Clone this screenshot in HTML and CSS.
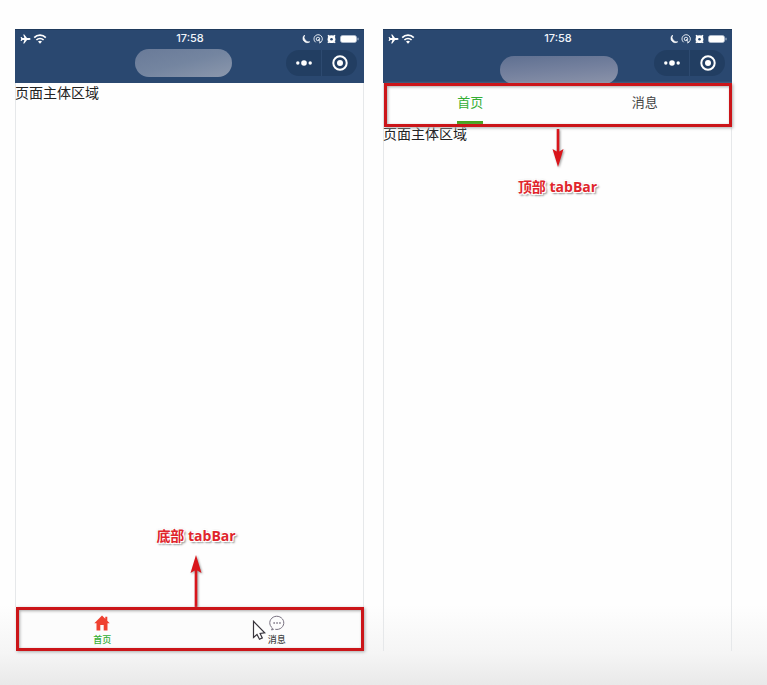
FILE: index.html
```html
<!DOCTYPE html>
<html lang="zh-CN">
<head>
<meta charset="utf-8">
<meta name="viewport" content="width=device-width, initial-scale=1">
<title>tabBar</title>
<link rel="stylesheet" href="styles.css">
</head>
<body>
<svg class="defs" aria-hidden="true">
  <symbol id="signal" viewBox="0 0 28 12">
    <path d="M10.500 6c0-.6-.6-.9-1.200-.9H7L4.300 1.500H3.200L4.400 5.100H2.500L1.500 3.900H.6L1.200 6 .6 8.100h.9l1-1.200h1.900L3.200 10.500h1.100L7 6.900h2.300c.6 0 1.200-.3 1.200-.9z" fill="#fff"/>
    <g fill="none" stroke="#fff" stroke-width="1.700"><path d="M14.200 4.600a8.200 8.200 0 0 1 11.600 0"/><path d="M16.400 7a5.100 5.100 0 0 1 7.200 0"/></g>
    <path d="M18 8.600a2.900 2.900 0 0 1 4 0l-2 2.200z" fill="#fff"/>
  </symbol>
  <symbol id="state" viewBox="0 0 60 12">
    <path d="M4.600 2A4.200 4.200 0 1 0 9.800 8.800 4.800 4.800 0 0 1 4.600 2z" fill="#fff" stroke="#fff" stroke-width=".6"/>
    <g fill="none" stroke="#dfe6ef"><path d="M15.700 9.300a4.200 4.200 0 1 1 3.300.7"/><circle cx="18" cy="6" r="1.800"/><path d="M18 6l3 4"/></g>
    <circle cx="31.500" cy="6.200" r="3.900" fill="#fff"/><path d="M28 3.500l1.300-1.100M35 3.500l-1.300-1.100M28.700 9l-.5.900M34.300 9l.5.900" stroke="#fff" stroke-width="1.800"/><circle cx="31.500" cy="6.200" r="1.300" fill="#2b4870"/>
    <rect x="40.500" y="2.500" width="16" height="7" rx="2" fill="#fff" stroke="#b4c1d2" stroke-width=".7"/><path d="M58 4.700v2.600" stroke="#9fb0c6" stroke-width="1.200"/>
  </symbol>
  <symbol id="more" viewBox="0 0 18 10"><circle cx="2.800" cy="5" r="1.700"/><circle cx="9" cy="5" r="2.800"/><circle cx="15.200" cy="5" r="1.700"/></symbol>
  <symbol id="target" viewBox="0 0 18 18"><circle cx="9" cy="9" r="6.700" fill="none" stroke="#fff" stroke-width="2"/><circle cx="9" cy="9" r="3"/></symbol>
</svg>
<main class="stage">
  <section class="phone">
    <header class="header">
      <div class="status">
        <svg class="signal"><use href="#signal"/></svg>
        <time>17:58</time>
        <svg class="state"><use href="#state"/></svg>
      </div>
      <div class="capsule">
        <button aria-label="更多"><svg class="more"><use href="#more"/></svg></button>
        <button aria-label="关闭"><svg class="target"><use href="#target"/></svg></button>
      </div>
      <span class="mask"></span>
    </header>
    <p class="content">页面主体区域</p>
    <div class="note note-bottom">
      <strong>底部 tabBar</strong>
      <svg class="arrow arrow-up" viewBox="0 0 14 52"><path d="M5.700 52h2.600V15.500L12.500 18 7 0 1.500 18l4.200-2.500z"/></svg>
    </div>
    <nav class="tabs tabs-bottom">
      <a href="#home" class="active">
        <svg class="icon" viewBox="0 0 16 16"><path d="M8 .5L.3 8.300h2.200v7.200h3.800V10h3.400v5.500h3.800V8.300h2.200L13.300 5.800V1.800h-2v2z" fill="#ef4130"/></svg>
        <span>首页</span>
      </a>
      <a href="#message">
        <svg class="icon" viewBox="0 0 16 16"><path d="M3.400 13A7 6.600 0 1 1 6.300 14.300M3.400 13l-.8 2 2.200-.8" fill="none" stroke="#77707f" stroke-width="1"/><path d="M4.400 8h1.500M7.300 8h1.500M10.200 8h1.500" stroke="#77707f" stroke-width="1.400"/></svg>
        <span>消息</span>
      </a>
      <svg class="cursor" viewBox="0 0 14 21"><path d="M1.500 1.300v16.200l3.500-3 2.500 4.700 2.800-1.300-2.200-4.500 4.600-.5z" fill="#fff" stroke="#38343c" stroke-width="1.200"/></svg>
    </nav>
  </section>

  <section class="phone">
    <header class="header">
      <div class="status">
        <svg class="signal"><use href="#signal"/></svg>
        <time>17:58</time>
        <svg class="state"><use href="#state"/></svg>
      </div>
      <div class="capsule">
        <button aria-label="更多"><svg class="more"><use href="#more"/></svg></button>
        <button aria-label="关闭"><svg class="target"><use href="#target"/></svg></button>
      </div>
      <span class="mask mask-wide"></span>
    </header>
    <nav class="tabs tabs-top">
      <a href="#home-top" class="active">首页</a>
      <a href="#message-top">消息</a>
    </nav>
    <p class="content">页面主体区域</p>
    <div class="note note-top">
      <svg class="arrow" viewBox="0 0 14 38"><path d="M5.700 0h2.600v22.500L12.500 20 7 38 1.500 20l4.200 2.500z"/></svg>
      <strong>顶部 tabBar</strong>
    </div>
  </section>
</main>
</body>
</html>
```
FILE: styles.css
```css
* {
  box-sizing: border-box;
}

body {
  margin: 0;
  font-family: "Open Sans", "Noto Sans CJK SC", sans-serif;
  color: #222;
  background: #fefefe;
}

svg {
  display: block;
}

.defs {
  position: absolute;
  width: 0;
  height: 0;
}

.stage {
  display: grid;
  grid-template-columns: 1fr 1fr;
  gap: 19px;
  min-height: 100vh;
  padding: 29px 35px 34px 15px;
  background: linear-gradient(to top, #e9e9e9, #f5f5f5 32px, #fefefe 80px);
}

.phone {
  display: flex;
  flex-direction: column;
  box-shadow: inset 1px 0 #e6e8ea, inset -1px 0 #e6e8ea;
}

.header {
  position: relative;
  height: 54px;
  background: #2a4870;
  border-top: 1px solid #1f3a5c;
}

.status {
  display: grid;
  grid-template-columns: 1fr auto 1fr;
  align-items: center;
  height: 17px;
  padding: 0 4px 0 5px;
}

.status time {
  color: #f1f5fa;
  font: 500 11px/17px Inter, sans-serif;
}

.signal {
  width: 28px;
  height: 12px;
}

.state {
  width: 60px;
  height: 12px;
  justify-self: end;
}

.capsule {
  display: flex;
  width: 71px;
  height: 26px;
  margin: 3px 7px 0 auto;
  border-radius: 13px;
  background: #223e62;
}

.capsule button {
  display: flex;
  flex: 1;
  align-items: center;
  justify-content: center;
  padding: 0;
  border: 0;
  background: none;
  fill: #fff;
}

.capsule button + button {
  border-left: 1px solid #2d4a70;
}

.more {
  width: 18px;
  height: 10px;
}

.target {
  width: 18px;
  height: 18px;
}

.mask {
  position: absolute;
  top: 19px;
  left: 120px;
  width: 97px;
  height: 28px;
  border-radius: 14px;
  background: linear-gradient(165deg, #697a98, #7485a0 50%, #8c98ad);
}

.mask-wide {
  top: 26px;
  left: 117px;
  width: 118px;
  background: linear-gradient(175deg, #5f7091, #75819e 50%, #8c94aa);
}

.content {
  margin: 0;
  font-size: 14px;
  line-height: 20px;
}

.tabs {
  position: relative;
  display: flex;
}

.tabs::after {
  content: "";
  position: absolute;
  inset: 0 0 0 1px;
  border: 3px solid #cb1519;
  box-shadow: 1px 1px 3px #aaa, inset 1px 1px 3px #aaa;
  pointer-events: none;
}

.tabs a {
  flex: 1;
  color: #444;
  text-align: center;
  text-decoration: none;
}

.tabs .active {
  color: #35ae35;
}

.tabs-top {
  height: 41px;
}

.tabs-top::after {
  bottom: -3px;
}

.tabs-top a {
  font-size: 13px;
  line-height: 38px;
}

.tabs-top .active::after {
  content: "";
  display: block;
  width: 26px;
  height: 3px;
  margin: 0 auto;
  background: #45a51e;
}

.tabs-bottom {
  height: 44px;
  background: #fcfcfc;
}

.tabs-bottom a {
  display: flex;
  flex-direction: column;
  align-items: center;
  padding-top: 8px;
  font-size: 9px;
  font-weight: 500;
  line-height: 18px;
}

.icon {
  width: 16px;
  height: 16px;
}

.cursor {
  position: absolute;
  top: 13px;
  left: 68%;
  width: 14px;
  height: 21px;
}

.note {
  display: flex;
  flex-direction: column;
  align-items: center;
  color: #e0252c;
  font-size: 14px;
  line-height: 20px;
}

.note strong {
  text-shadow: -1px -1px 0 #fff, 1px -1px 0 #fff, -1px 1px 0 #fff, 1px 1px 0 #fff, 0 0 2px #777, 2px 2px 2px #888;
}

.note-bottom {
  gap: 9px;
  margin-top: auto;
  padding-left: 13px;
}

.note-top {
  gap: 10px;
}

.arrow {
  width: 14px;
  height: 38px;
  margin-top: -15px;
  fill: #d9151b;
  filter: drop-shadow(1px 1px 1px #999);
}

.arrow-up {
  height: 52px;
  margin-top: 0;
}
```
